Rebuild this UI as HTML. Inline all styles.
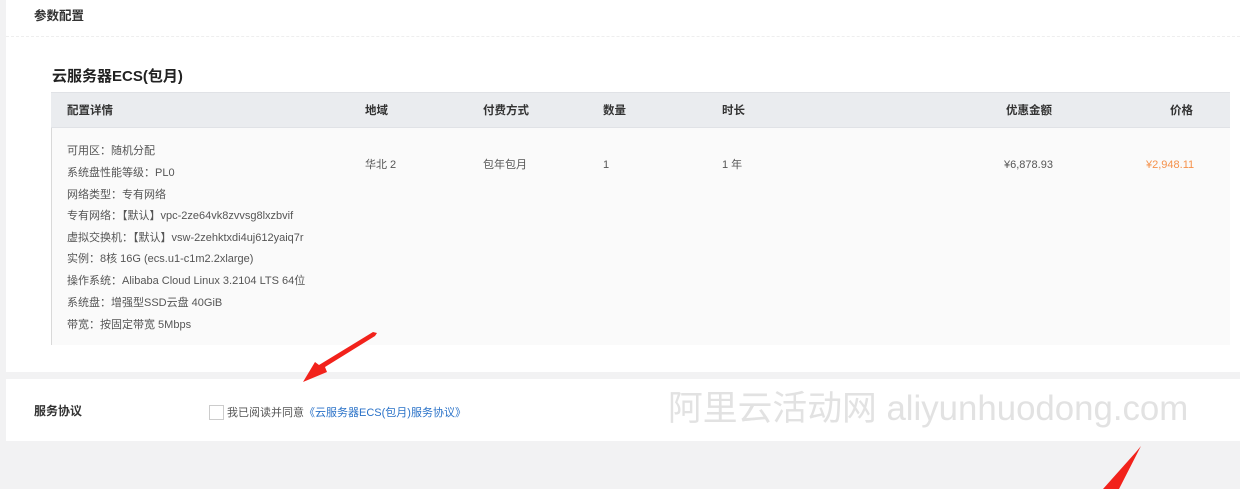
<!DOCTYPE html>
<html><head><meta charset="utf-8"><style>
*{margin:0;padding:0;box-sizing:border-box}
body{width:1240px;height:489px;background:#f2f2f3;font-family:"Liberation Sans","Noto Sans CJK SC",sans-serif;color:#333;position:relative;overflow:hidden;font-size:12px}
.p1{position:absolute;left:6px;top:0;width:1234px;height:372px;background:#fff}
.p2{position:absolute;left:6px;top:379px;width:1234px;height:62px;background:#fff}
.abs{position:absolute;white-space:nowrap;line-height:16px}
.hd{position:absolute;left:51px;top:92px;width:1179px;height:36px;background:#eaecef;border-top:1px solid #e0e2e6;border-bottom:1px solid #e0e2e6}
.bd{position:absolute;left:51px;top:128px;width:1179px;height:217px;background:#fafafa;border-left:1px solid #d9d9d9}
.th{top:103px;font-size:11.5px;color:#333;font-weight:bold}
.ln{left:67px;font-size:11px;color:#555}
.v{top:157px}
</style></head><body>
<div class="p1"></div>
<div class="abs" style="left:34px;top:8px;font-size:12.5px;color:#333;font-weight:bold">参数配置</div>
<div class="abs" style="left:6px;top:36px;width:1234px;border-top:1px dashed #eee"></div>
<div class="abs" style="left:52px;top:68px;font-size:15px;color:#222;font-weight:bold;line-height:18px">云服务器ECS(包月)</div>
<div class="hd"></div><div class="bd"></div>
<div class="abs th" style="left:67px">配置详情</div>
<div class="abs th" style="left:365px">地域</div>
<div class="abs th" style="left:483px">付费方式</div>
<div class="abs th" style="left:603px">数量</div>
<div class="abs th" style="left:722px">时长</div>
<div class="abs th" style="left:1006px">优惠金额</div>
<div class="abs th" style="left:1170px">价格</div>
<div class="abs ln" style="top:143px">可用区：随机分配</div>
<div class="abs ln" style="top:165px">系统盘性能等级：PL0</div>
<div class="abs ln" style="top:187px">网络类型：专有网络</div>
<div class="abs ln" style="top:208px">专有网络：【默认】vpc-2ze64vk8zvvsg8lxzbvif</div>
<div class="abs ln" style="top:230px">虚拟交换机：【默认】vsw-2zehktxdi4uj612yaiq7r</div>
<div class="abs ln" style="top:251px">实例：8核 16G (ecs.u1-c1m2.2xlarge)</div>
<div class="abs ln" style="top:273px">操作系统：Alibaba Cloud Linux 3.2104 LTS 64位</div>
<div class="abs ln" style="top:295px">系统盘：增强型SSD云盘 40GiB</div>
<div class="abs ln" style="top:317px">带宽：按固定带宽 5Mbps</div>
<div class="abs ln v" style="left:365px">华北 2</div>
<div class="abs ln v" style="left:483px">包年包月</div>
<div class="abs ln v" style="left:603px">1</div>
<div class="abs ln v" style="left:722px">1 年</div>
<div class="abs ln v" style="left:1004px">¥6,878.93</div>
<div class="abs ln v" style="left:1146px;color:#f5914a">¥2,948.11</div>
<div class="p2"></div>
<div class="abs" style="left:34px;top:403px;font-size:12px;font-weight:bold;color:#333">服务协议</div>
<div class="abs" style="left:209px;top:405px;width:15px;height:15px;border:1px solid #ccc;background:#fff"></div>
<div class="abs" style="left:227px;top:405px;font-size:11px;color:#555">我已阅读并同意<span style="color:#2a72c8">《云服务器ECS(包月)服务协议》</span></div>
<div class="abs" style="left:668px;top:389px;font-size:34.8px;line-height:40px;color:#e2e2e2">阿里云活动网 aliyunhuodong.com</div>
<svg class="abs" style="left:0;top:0" width="1240" height="489">
<polygon points="377,333 375,336 325,367 327,372 303,382 315,362 319,365 373,332" fill="#f2221b"/>
<polygon points="1141,446 1136,452 1103,489 1119,489" fill="#f2221b"/>
</svg>
</body></html>
